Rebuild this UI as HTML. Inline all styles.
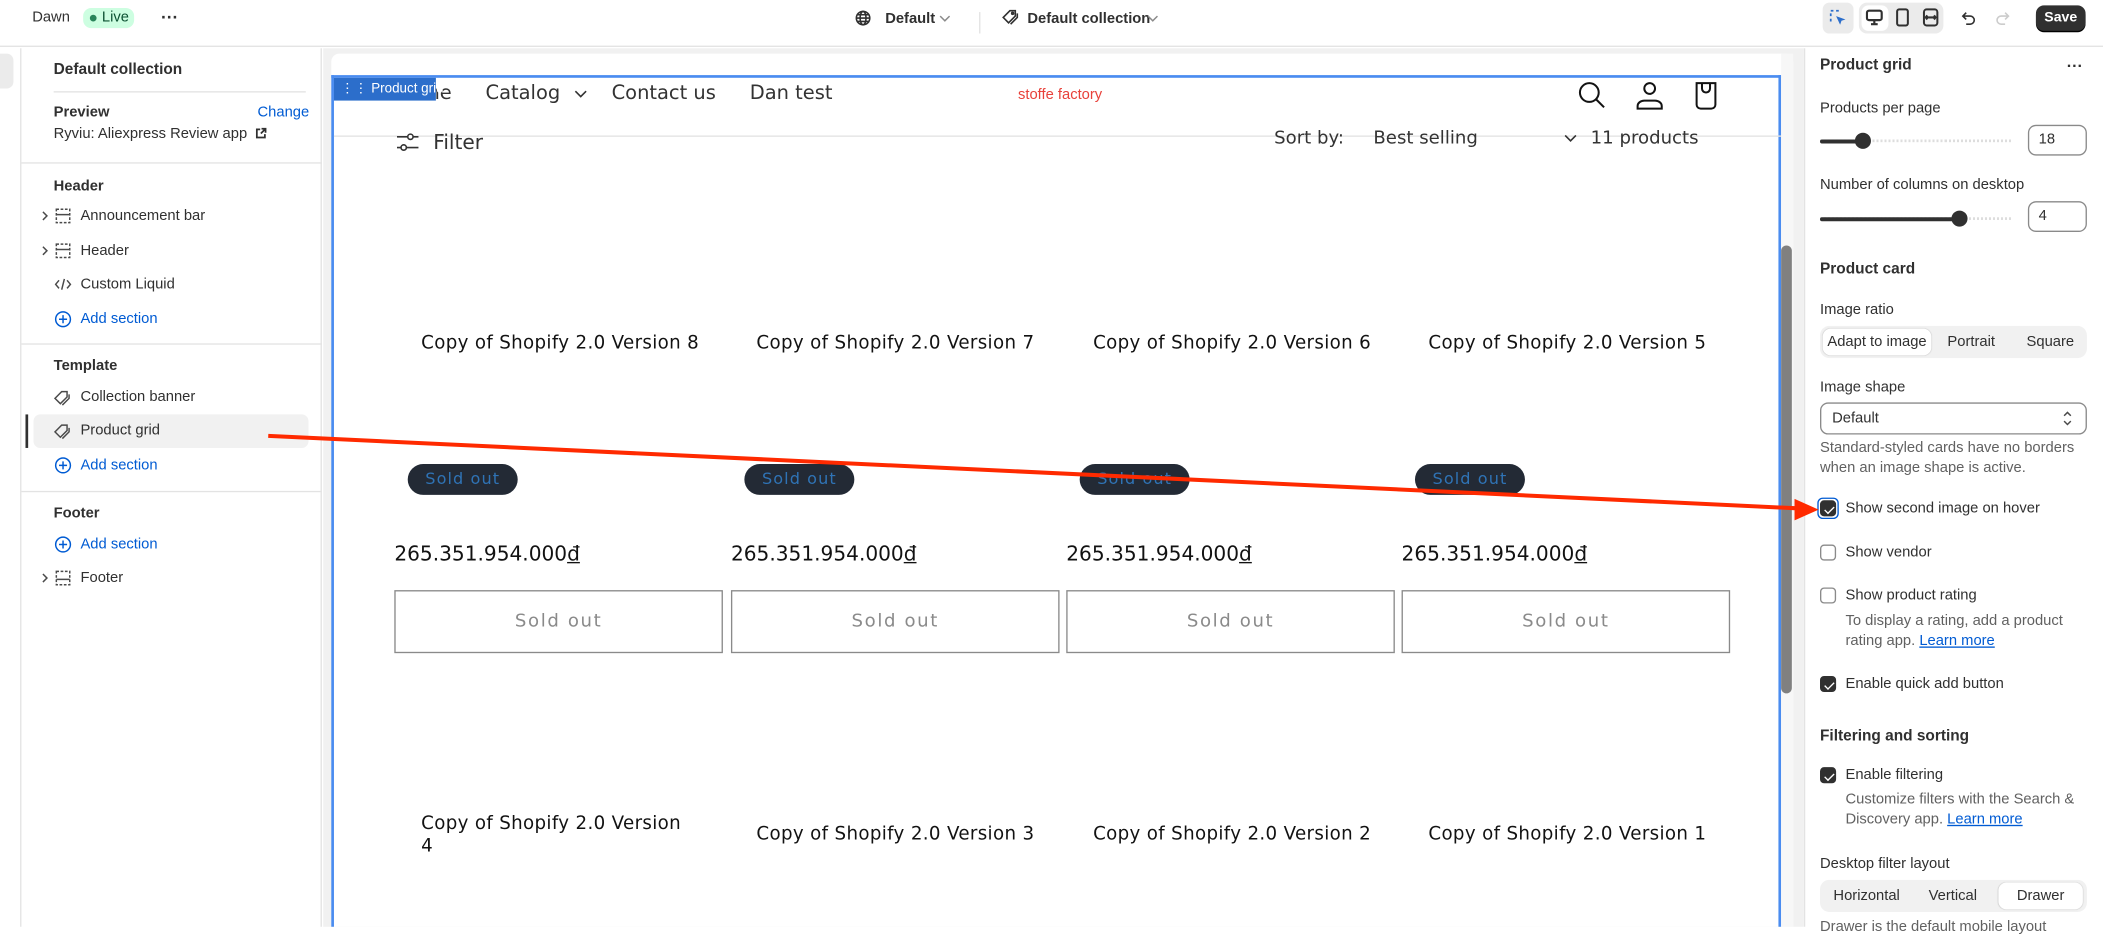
<!DOCTYPE html>
<html><head><meta charset="utf-8"><style>
*{margin:0;padding:0;box-sizing:border-box}
html,body{width:2103px;height:926px;overflow:hidden;background:#fff}
#s{position:absolute;left:0;top:0;width:1568px;height:690.5px;transform:scale(1.34120);transform-origin:0 0;font-family:"Liberation Sans",sans-serif;color:#303030;font-size:11px}
.a{position:absolute;white-space:nowrap;line-height:16px}
.b{font-weight:bold}
.bl{color:#005bd3}
.g{color:#616161}
.m{font-family:"DejaVu Sans","Liberation Sans",sans-serif;letter-spacing:0;color:#121212}
.hr{position:absolute;height:1px;background:#e3e3e3}
.cb{position:absolute;width:12px;height:12px;border-radius:3px;border:1px solid #8a8a8a;background:#fff}
.cb.on{background:#303030;border-color:#303030}
.cb.on:after{content:"";position:absolute;left:3.5px;top:1.5px;width:3px;height:6px;border:solid #fff;border-width:0 1.3px 1.3px 0;transform:rotate(45deg)}
.prod{position:absolute;font-size:13.6px;letter-spacing:.25px}
.badge{position:absolute;width:82px;height:23px;border-radius:12px;background:#232a35;color:#2f73b5;font-size:12px;text-align:center;line-height:23px;letter-spacing:.8px;font-family:"DejaVu Sans",sans-serif}
.btn{position:absolute;width:245px;height:47px;border:1px solid #8a8a8a;color:#8a8a8a;font-size:13.5px;text-align:center;line-height:45px;letter-spacing:1.2px;font-family:"DejaVu Sans",sans-serif}
.price{position:absolute;font-size:15px;font-family:"DejaVu Sans",sans-serif;color:#121212}
</style></head><body><div id="s">
<!-- top bar -->
<div style="position:absolute;left:0;top:0;width:1568px;height:35px;border-bottom:1px solid #e3e3e3;background:#fff"></div>
<div class="a" style="left:24px;top:5px">Dawn</div>
<div style="position:absolute;left:62px;top:6px;width:38px;height:15px;border-radius:6px;background:#cdfee1"></div>
<div style="position:absolute;left:67px;top:11px;width:5px;height:5px;border-radius:3px;background:#29845a"></div>
<div class="a" style="left:76px;top:5px;color:#0c5132">Live</div>
<div class="a b" style="left:120px;top:5px;font-size:13px">···</div>
<svg style="position:absolute;left:637px;top:7px" width="13" height="13" viewBox="0 0 13 13" fill="none" stroke="#303030" stroke-width="1.2"><circle cx="6.5" cy="6.5" r="5"/><ellipse cx="6.5" cy="6.5" rx="2.2" ry="5"/><path d="M1.5 6.5h10M2.2 4h8.6M2.2 9h8.6"/></svg>
<div class="a b" style="left:660px;top:6px">Default</div>
<svg style="position:absolute;left:700px;top:11px" width="9" height="6"><path d="M1 1l3.5 3.5L8 1" fill="none" stroke="#8a8a8a" stroke-width="1.1"/></svg>
<div style="position:absolute;left:730px;top:9px;width:1px;height:16px;background:#e3e3e3"></div>
<svg style="position:absolute;left:747px;top:7px" width="13" height="12" viewBox="0 0 13 12" fill="none" stroke="#303030" stroke-width="1.2"><path d="M1 6l5-5h4v4l-5 5z"/><path d="M11.5 3v3l-5 5"/><circle cx="8" cy="3" r=".7"/></svg>
<div class="a b" style="left:766px;top:6px">Default collection</div>
<svg style="position:absolute;left:855px;top:11px" width="9" height="6"><path d="M1 1l3.5 3.5L8 1" fill="none" stroke="#8a8a8a" stroke-width="1.1"/></svg>
<div style="position:absolute;left:1359px;top:2px;width:23px;height:23px;border-radius:5px;background:#ebebeb"></div>
<svg style="position:absolute;left:1364px;top:7px" width="13" height="13" fill="none"><path d="M1 1h2M5 1h2M1 3v2M1 7v2" stroke="#2c6ecb" stroke-width="1.3"/><path d="M5 5l7 2.5-3 1-1 3z" fill="#2c6ecb"/></svg>
<div style="position:absolute;left:1386px;top:2px;width:63px;height:23px;border-radius:6px;background:#ebebeb"></div>
<div style="position:absolute;left:1388px;top:4px;width:20px;height:19px;border-radius:5px;background:#fff"></div>
<svg style="position:absolute;left:1391px;top:7px" width="13" height="13" fill="none" stroke="#303030" stroke-width="1.6"><rect x="1" y="1" width="11" height="7" rx="1.5"/><path d="M4 11h5M6.5 8v3"/></svg>
<svg style="position:absolute;left:1413px;top:6px" width="11" height="14" fill="none" stroke="#303030" stroke-width="1.5"><rect x="1.5" y="1" width="8" height="12" rx="1.5"/></svg>
<svg style="position:absolute;left:1433px;top:6px" width="13" height="14" fill="none" stroke="#303030" stroke-width="1.5"><rect x="1.5" y="1" width="10" height="12" rx="2"/><path d="M3 7h7M4 5.5L2.8 7 4 8.5M9 5.5l1.2 1.5L9 8.5"/></svg>
<svg style="position:absolute;left:1461px;top:8px" width="12" height="12" fill="none" stroke="#303030" stroke-width="1.2"><path d="M3 4h5a3 3 0 010 6H5M5 1.5L2.5 4 5 6.5"/></svg>
<svg style="position:absolute;left:1488px;top:8px" width="12" height="12" fill="none" stroke="#cccccc" stroke-width="1.2"><path d="M9 4H4a3 3 0 000 6h3M7 1.5L9.5 4 7 6.5"/></svg>
<div style="position:absolute;left:1518px;top:4px;width:37px;height:19px;border-radius:6px;background:#303030;box-shadow:0 1px 0 #000"></div>
<div class="a b" style="left:1518px;top:4px;width:37px;text-align:center;color:#fff;font-size:10.5px;line-height:19px">Save</div>
<!-- icon rail -->
<div style="position:absolute;left:0;top:36px;width:16px;height:655px;border-right:1px solid #e3e3e3;background:#fff"></div>
<div style="position:absolute;left:0;top:40px;width:10px;height:26px;border-radius:0 5px 5px 0;background:#ebebeb"></div>
<!-- left panel -->
<div style="position:absolute;left:16px;top:36px;width:224px;height:655px;background:#fff;border-right:1px solid #e3e3e3"></div>
<div class="a b" style="left:40px;top:44px;font-size:11.5px">Default collection</div>
<div class="hr" style="left:40px;top:68px;width:188px"></div>
<div class="a b" style="left:40px;top:76px">Preview</div>
<div class="a bl" style="left:192px;top:76px">Change</div>
<div class="a" style="left:40px;top:92px">Ryviu: Aliexpress Review app</div>
<svg style="position:absolute;left:190px;top:95px" width="9" height="9" fill="none" stroke="#303030" stroke-width="1.3"><path d="M4 1.5H1.5v6h6V5M5 1h3v3M8 1L4.5 4.5"/></svg>
<div class="hr" style="left:16px;top:121px;width:224px"></div>
<div class="a b" style="left:40px;top:131px">Header</div>
<div class="a" style="left:60px;top:153px">Announcement bar</div>
<div class="a" style="left:60px;top:179px">Header</div>
<div class="a" style="left:60px;top:204px">Custom Liquid</div>
<div class="a bl" style="left:60px;top:230px">Add section</div>
<div class="hr" style="left:16px;top:256px;width:224px"></div>
<div class="a b" style="left:40px;top:265px">Template</div>
<div class="a" style="left:60px;top:288px">Collection banner</div>
<div style="position:absolute;left:25px;top:309px;width:205px;height:25px;border-radius:5px;background:#f1f1f1"></div>
<div style="position:absolute;left:19px;top:309px;width:1.5px;height:25px;background:#303030"></div>
<div class="a" style="left:60px;top:313px">Product grid</div>
<div class="a bl" style="left:60px;top:339px">Add section</div>
<div class="hr" style="left:16px;top:366px;width:224px"></div>
<div class="a b" style="left:40px;top:375px">Footer</div>
<div class="a bl" style="left:60px;top:398px">Add section</div>
<div class="a" style="left:60px;top:423px">Footer</div>
<!-- left icons -->
<svg style="position:absolute;left:28px;top:150px" width="30" height="290" fill="none" stroke="#4a4a4a" stroke-width="1.1">
<path d="M4 8l3 3-3 3M4 34l3 3-3 3M4 278l3 3-3 3"/>
<rect x="14" y="6" width="10" height="10" stroke-dasharray="2 1.2"/><path d="M14 10h10"/>
<rect x="14" y="32" width="10" height="10" stroke-dasharray="2 1.2"/><path d="M14 36h10"/>
<path d="M16 59l-2.5 3 2.5 3M22 59l2.5 3-2.5 3M20 58l-2 8"/>
<circle cx="19" cy="88" r="5.5" stroke="#005bd3"/><path d="M19 85v6M16 88h6" stroke="#005bd3"/>
<path d="M13 147l5-5h4v4l-5 5zM23.5 144v3l-5 5"/>
<path d="M13 172l5-5h4v4l-5 5zM23.5 169v3l-5 5"/>
<circle cx="19" cy="197" r="5.5" stroke="#005bd3"/><path d="M19 194v6M16 197h6" stroke="#005bd3"/>
<circle cx="19" cy="256" r="5.5" stroke="#005bd3"/><path d="M19 253v6M16 256h6" stroke="#005bd3"/>
<rect x="14" y="276" width="10" height="10" stroke-dasharray="2 1.2"/><path d="M14 282h10"/>
</svg>
<!-- preview area -->
<div style="position:absolute;left:241px;top:36px;width:1104px;height:655px;background:#f1f1f1"></div>
<div style="position:absolute;left:247px;top:40px;width:1090px;height:651px;background:#fff;border-radius:6px 6px 0 0"></div>
<div style="position:absolute;left:247px;top:56px;width:1081px;height:635px;border:2px solid #4a8cf0;border-bottom:none"></div>
<div class="hr" style="left:249px;top:101px;width:1079px"></div>
<div class="a m" style="left:294px;top:62px;font-size:14.5px;color:#333">Home</div>
<div style="position:absolute;left:249px;top:58px;width:76px;height:17px;background:#2c6ecb"></div>
<div class="a" style="left:254px;top:58px;color:#fff;font-size:10px;line-height:17px">⋮⋮ Product grid</div>
<div class="a m" style="left:362px;top:62px;font-size:14.5px;color:#333">Catalog</div>
<svg style="position:absolute;left:428px;top:67px" width="10" height="7"><path d="M1 1l4 4 4-4" fill="none" stroke="#333" stroke-width="1.2"/></svg>
<div class="a m" style="left:456px;top:62px;font-size:14.5px;color:#333">Contact us</div>
<div class="a m" style="left:559px;top:62px;font-size:14.5px;color:#333">Dan test</div>
<div class="a" style="left:759px;top:63px;font-size:11px;color:#e8413a">stoffe factory</div>
<svg style="position:absolute;left:1176px;top:60px" width="110" height="24" fill="none" stroke="#121212" stroke-width="1.5"><circle cx="9" cy="9" r="7"/><path d="M14 14l6 6"/><circle cx="54" cy="6" r="4"/><path d="M45 21v-2a5 4 0 015-4h8a5 4 0 015 4v2z"/><path d="M89 2h14v16a3 3 0 01-3 3h-8a3 3 0 01-3-3z"/><path d="M93 2v4a3 3 0 006 0V2"/></svg>
<svg style="position:absolute;left:295px;top:98px" width="18" height="16" fill="none" stroke="#333" stroke-width="1.2"><path d="M1 4h16M1 12h16"/><circle cx="11" cy="4" r="2" fill="#fff"/><circle cx="6" cy="12" r="2" fill="#fff"/></svg>
<div class="a m" style="left:323px;top:98px;font-size:15px;color:#333">Filter</div>
<div class="a m" style="left:950px;top:95px;font-size:13.5px;color:#333">Sort by:</div>
<div class="a m" style="left:1024px;top:95px;font-size:13.5px;color:#333">Best selling</div>
<svg style="position:absolute;left:1166px;top:100px" width="10" height="7"><path d="M1 1l4 4 4-4" fill="none" stroke="#333" stroke-width="1.2"/></svg>
<div class="a m" style="left:1186px;top:95px;font-size:13.5px;color:#333">11 products</div>
<!-- products -->
<div class="a m prod" style="left:314px;top:248px">Copy of Shopify 2.0 Version 8</div>
<div class="a m prod" style="left:564px;top:248px">Copy of Shopify 2.0 Version 7</div>
<div class="a m prod" style="left:815px;top:248px">Copy of Shopify 2.0 Version 6</div>
<div class="a m prod" style="left:1065px;top:248px">Copy of Shopify 2.0 Version 5</div>
<div class="badge" style="left:304px;top:346px">Sold out</div>
<div class="badge" style="left:555px;top:346px">Sold out</div>
<div class="badge" style="left:805px;top:346px">Sold out</div>
<div class="badge" style="left:1055px;top:346px">Sold out</div>
<div class="a price" style="left:294px;top:405px">265.351.954.000<u>đ</u></div>
<div class="a price" style="left:545px;top:405px">265.351.954.000<u>đ</u></div>
<div class="a price" style="left:795px;top:405px">265.351.954.000<u>đ</u></div>
<div class="a price" style="left:1045px;top:405px">265.351.954.000<u>đ</u></div>
<div class="btn" style="left:294px;top:440px">Sold out</div>
<div class="btn" style="left:545px;top:440px">Sold out</div>
<div class="btn" style="left:795px;top:440px">Sold out</div>
<div class="btn" style="left:1045px;top:440px">Sold out</div>
<div class="a m prod" style="left:314px;top:606px;line-height:17px">Copy of Shopify 2.0 Version<br>4</div>
<div class="a m prod" style="left:564px;top:614px">Copy of Shopify 2.0 Version 3</div>
<div class="a m prod" style="left:815px;top:614px">Copy of Shopify 2.0 Version 2</div>
<div class="a m prod" style="left:1065px;top:614px">Copy of Shopify 2.0 Version 1</div>
<!-- scrollbar -->
<div style="position:absolute;left:1328px;top:40px;width:9px;height:651px;background:#f7f7f7"></div>
<div style="position:absolute;left:1328px;top:183px;width:8px;height:334px;border-radius:4px;background:#808080"></div>
<!-- right panel -->
<div style="position:absolute;left:1345px;top:36px;width:223px;height:655px;background:#fff;border-left:1px solid #e3e3e3"></div>
<div class="a b" style="left:1357px;top:41px;font-size:11.5px">Product grid</div>
<div class="a b" style="left:1541px;top:41px;font-size:12px">···</div>
<div class="a" style="left:1357px;top:73px">Products per page</div>
<div style="position:absolute;left:1357px;top:104px;width:143px;height:2px;background:repeating-linear-gradient(90deg,#ddd 0 1.5px,transparent 1.5px 3px)"></div>
<div style="position:absolute;left:1357px;top:103.5px;width:32px;height:3px;border-radius:2px;background:#303030"></div>
<div style="position:absolute;left:1383px;top:99px;width:12px;height:12px;border-radius:6px;background:#303030"></div>
<div style="position:absolute;left:1512px;top:93px;width:44px;height:23px;border:1px solid #8a8a8a;border-radius:6px"></div>
<div class="a" style="left:1520px;top:96px">18</div>
<div class="a" style="left:1357px;top:130px">Number of columns on desktop</div>
<div style="position:absolute;left:1357px;top:162px;width:143px;height:2px;background:repeating-linear-gradient(90deg,#ddd 0 1.5px,transparent 1.5px 3px)"></div>
<div style="position:absolute;left:1357px;top:161.5px;width:104px;height:3px;border-radius:2px;background:#303030"></div>
<div style="position:absolute;left:1455px;top:157px;width:12px;height:12px;border-radius:6px;background:#303030"></div>
<div style="position:absolute;left:1512px;top:150px;width:44px;height:23px;border:1px solid #8a8a8a;border-radius:6px"></div>
<div class="a" style="left:1520px;top:153px">4</div>
<div class="a b" style="left:1357px;top:193px;font-size:11.5px">Product card</div>
<div class="a" style="left:1357px;top:223px">Image ratio</div>
<div style="position:absolute;left:1357px;top:243px;width:199px;height:24px;border-radius:7px;background:#f1f1f1"></div>
<div style="position:absolute;left:1359px;top:245px;width:81px;height:20px;border-radius:6px;background:#fff;box-shadow:0 0 1px #bbb"></div>
<div class="a" style="left:1359px;top:247px;width:81px;text-align:center">Adapt to image</div>
<div class="a" style="left:1452px;top:247px">Portrait</div>
<div class="a" style="left:1511px;top:247px">Square</div>
<div class="a" style="left:1357px;top:281px">Image shape</div>
<div style="position:absolute;left:1357px;top:300px;width:199px;height:24px;border:1px solid #8a8a8a;border-radius:6px"></div>
<div class="a" style="left:1366px;top:304px">Default</div>
<svg style="position:absolute;left:1538px;top:306px" width="7" height="12" fill="none" stroke="#4a4a4a" stroke-width="1.1"><path d="M1 4l2.5-2.5L6 4M1 8l2.5 2.5L6 8"/></svg>
<div class="a g" style="left:1357px;top:327px;line-height:15px">Standard-styled cards have no borders<br>when an image shape is active.</div>
<div style="position:absolute;left:1355px;top:371px;width:16px;height:16px;border-radius:4px;border:1.5px solid #005bd3"></div>
<div class="cb on" style="left:1357px;top:373px"></div>
<div class="a" style="left:1376px;top:371px">Show second image on hover</div>
<div class="cb" style="left:1357px;top:406px"></div>
<div class="a" style="left:1376px;top:404px">Show vendor</div>
<div class="cb" style="left:1357px;top:438px"></div>
<div class="a" style="left:1376px;top:436px">Show product rating</div>
<div class="a g" style="left:1376px;top:456px;line-height:15px">To display a rating, add a product<br>rating app. <span class="bl" style="text-decoration:underline">Learn more</span></div>
<div class="cb on" style="left:1357px;top:504px"></div>
<div class="a" style="left:1376px;top:502px">Enable quick add button</div>
<div class="a b" style="left:1357px;top:541px;font-size:11.5px">Filtering and sorting</div>
<div class="cb on" style="left:1357px;top:572px"></div>
<div class="a" style="left:1376px;top:570px">Enable filtering</div>
<div class="a g" style="left:1376px;top:589px;line-height:15px">Customize filters with the Search &amp;<br>Discovery app. <span class="bl" style="text-decoration:underline">Learn more</span></div>
<div class="a" style="left:1357px;top:636px">Desktop filter layout</div>
<div style="position:absolute;left:1357px;top:656px;width:199px;height:24px;border-radius:7px;background:#f1f1f1"></div>
<div style="position:absolute;left:1490px;top:658px;width:63px;height:20px;border-radius:6px;background:#fff;box-shadow:0 0 1px #bbb"></div>
<div class="a" style="left:1367px;top:660px">Horizontal</div>
<div class="a" style="left:1438px;top:660px">Vertical</div>
<div class="a" style="left:1490px;top:660px;width:63px;text-align:center">Drawer</div>
<div class="a g" style="left:1357px;top:683px">Drawer is the default mobile layout</div>
<!-- red arrow -->
<svg style="position:absolute;left:0;top:0" width="1568" height="691"><line x1="200" y1="325" x2="1340" y2="379" stroke="#ff2a00" stroke-width="3"/><path d="M1356 380l-18-8v16z" fill="#ff2a00"/></svg>
</div></body></html>
